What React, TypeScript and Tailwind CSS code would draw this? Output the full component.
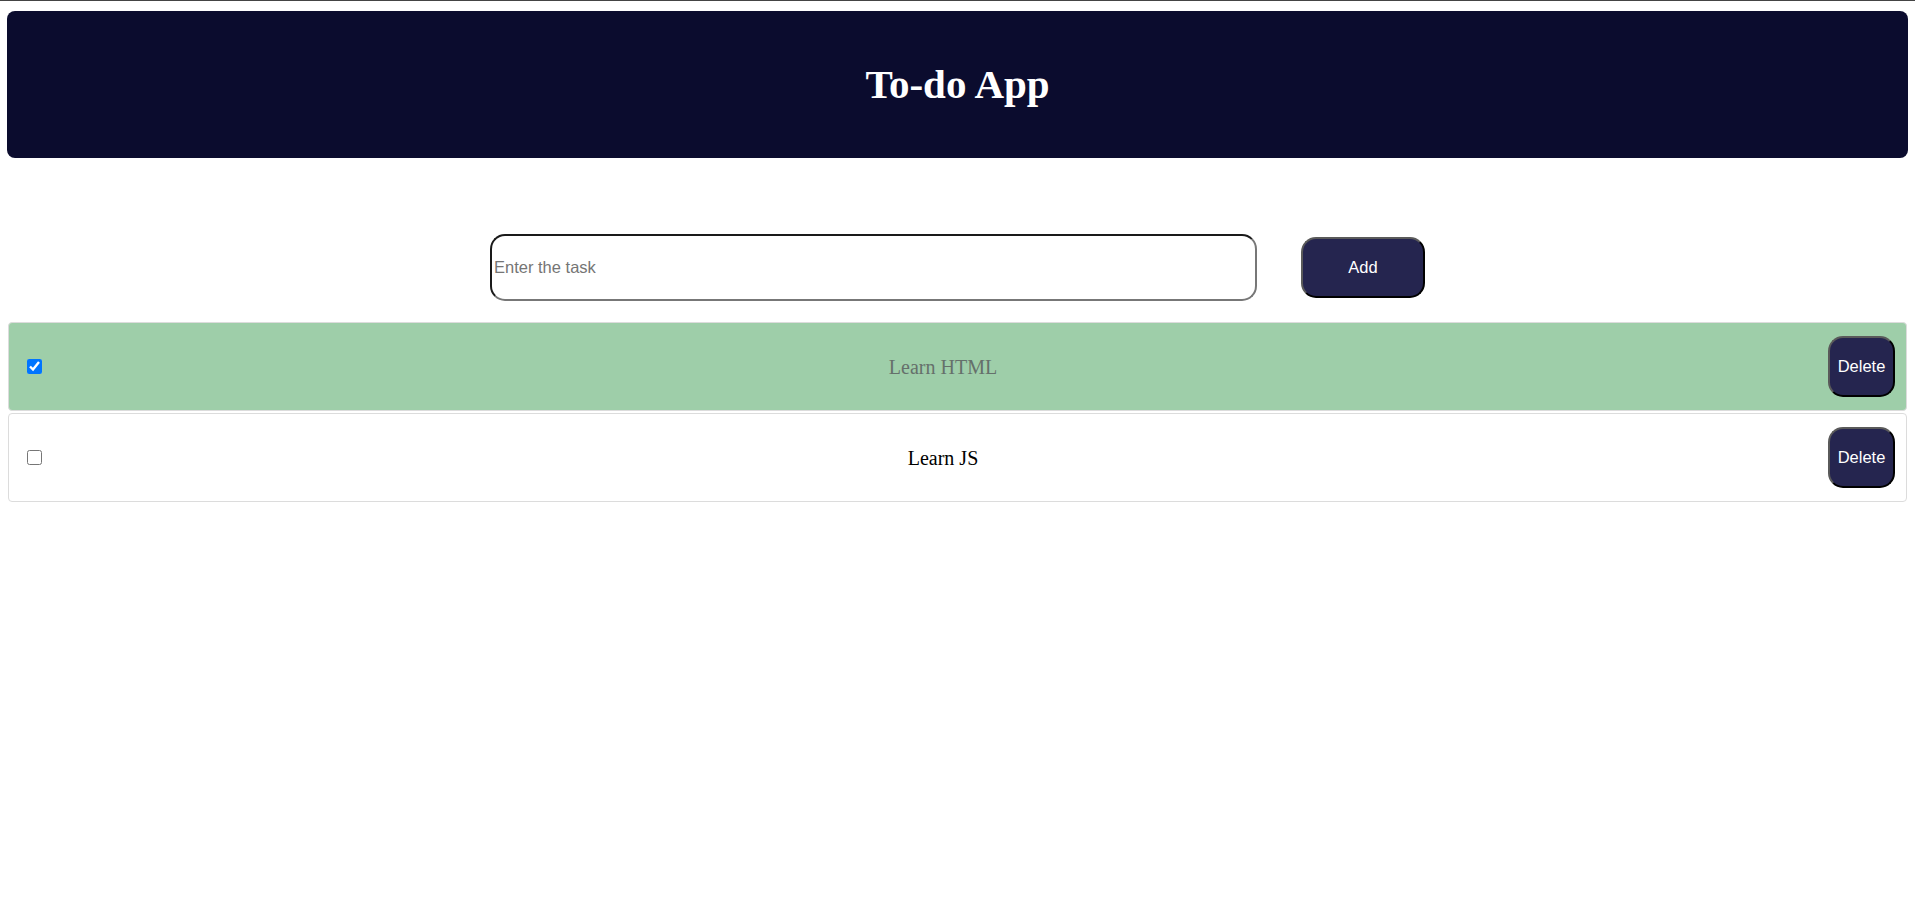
import React, { useState } from 'react';

type Task = { id: number; text: string; done: boolean };

const App = () => {
  const [tasks, setTasks] = useState<Task[]>([
    { id: 1, text: 'Learn HTML', done: true },
    { id: 2, text: 'Learn JS', done: false },
  ]);
  const [value, setValue] = useState('');

  const addTask = () => {
    if (!value.trim()) return;
    setTasks([...tasks, { id: Date.now(), text: value, done: false }]);
    setValue('');
  };

  return (
    <div className="min-h-screen bg-white">
      <div className="h-px bg-[#444]" />

      {/* Header */}
      <div className="mx-[7px] mt-[10px] h-[147px] rounded-lg bg-[#0b0c2e] flex items-center justify-center">
        <h1 className="text-white text-[41px] font-bold font-['Liberation_Serif',serif] leading-none">
          To-do App
        </h1>
      </div>

      {/* Input */}
      <div className="mt-[76px] flex items-center justify-center gap-[44px]">
        <input
          value={value}
          onChange={(e) => setValue(e.target.value)}
          placeholder="Enter the task"
          className="w-[767px] h-[67px] px-[2px] rounded-[15px] border-2 border-t-[#1a1a1a] border-l-[#1a1a1a] border-r-[#777] border-b-[#777] text-[16.5px] text-black placeholder:text-[#757575] font-['Liberation_Sans',Arial,sans-serif] outline-none"
        />
        <button
          onClick={addTask}
          className="w-[124px] h-[61px] rounded-[15px] border-2 border-t-[#5a5a5a] border-l-[#5a5a5a] border-r-black border-b-black bg-[#25254f] text-white text-[16.5px] font-['Liberation_Sans',Arial,sans-serif]"
        >
          Add
        </button>
      </div>

      {/* List */}
      <div className="mt-[21px] mx-[8px] flex flex-col gap-[2px]">
        {tasks.map((t) => (
          <div
            key={t.id}
            className={`h-[89px] flex items-center rounded border border-[#dcdcdc] ${t.done ? 'bg-[#9ecea9]' : 'bg-white'}`}
          >
            <div className="w-[49px] pl-[18px] flex items-center">
              <input
                type="checkbox"
                checked={t.done}
                onChange={() =>
                  setTasks(tasks.map((x) => (x.id === t.id ? { ...x, done: !x.done } : x)))
                }
                className="w-[15px] h-[15px] m-0"
              />
            </div>
            <span
              className={`flex-1 text-center text-[20px] font-['Liberation_Serif',serif] ${t.done ? 'text-[#65706b]' : 'text-black'}`}
            >
              {t.text}
            </span>
            <button
              onClick={() => setTasks(tasks.filter((x) => x.id !== t.id))}
              className="mr-[11px] w-[67px] h-[61px] rounded-[15px] border-2 border-t-[#5a5a5a] border-l-[#5a5a5a] border-r-black border-b-black bg-[#25254f] text-white text-[16.5px] font-['Liberation_Sans',Arial,sans-serif]"
            >
              Delete
            </button>
          </div>
        ))}
      </div>
    </div>
  );
};

export default App;
